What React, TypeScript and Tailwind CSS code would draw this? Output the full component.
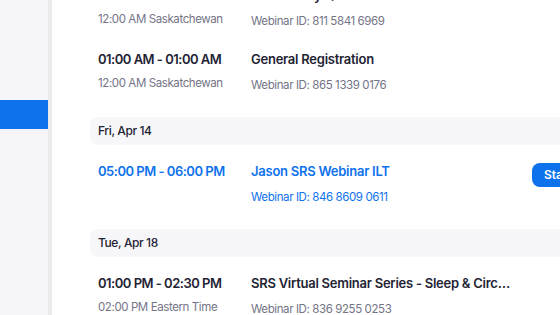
import { Fragment } from 'react';

type Row = {
  time: string;
  zone?: string;
  title: string;
  id: string;
  active?: boolean;
};

type Day = { label?: string; rows: Row[] };

const days: Day[] = [
  {
    rows: [
      { time: '12:00 AM - 01:00 AM', zone: '12:00 AM Saskatchewan', title: 'Community Q&A', id: '811 5841 6969' },
      { time: '01:00 AM - 01:00 AM', zone: '12:00 AM Saskatchewan', title: 'General Registration', id: '865 1339 0176' },
    ],
  },
  {
    label: 'Fri, Apr 14',
    rows: [{ time: '05:00 PM - 06:00 PM', title: 'Jason SRS Webinar ILT', id: '846 8609 0611', active: true }],
  },
  {
    label: 'Tue, Apr 18',
    rows: [
      {
        time: '01:00 PM - 02:30 PM',
        zone: '02:00 PM Eastern Time',
        title: 'SRS Virtual Seminar Series - Sleep & Circadian Rhythms',
        id: '836 9255 0253',
      },
    ],
  },
];

export default function App() {
  return (
    <div className="flex h-[315px] w-[560px] overflow-hidden bg-white font-['Inter',sans-serif] text-[#232333]">
      {/* Sidebar */}
      <aside className="flex w-[48px] shrink-0 flex-col bg-[#f6f6f8] pt-[100px]">
        <div className="h-[29px] bg-[#0e72ed]" />
      </aside>
      <div className="w-[4px] shrink-0 bg-[#ececef]" />

      {/* Meeting list */}
      <main className="flex-1 pl-[38px]">
        <div className="-mt-[31px]">
          {days.map((day, i) => (
            <Fragment key={i}>
              {day.label && (
                <div className="mt-[20px] flex h-[28px] items-center rounded-l-lg bg-[#f7f7fa] px-2 text-[12px] font-medium tracking-[-0.4px]">
                  {day.label}
                </div>
              )}
              {day.rows.map((row) => (
                <div key={row.id} className="relative flex h-[64px] pl-2 pt-4">
                  <div className="w-[153px] shrink-0">
                    <div
                      className={`text-[13px] leading-[20px] font-semibold tracking-[-0.5px] ${row.active ? 'text-[#0e72ed]' : ''}`}
                    >
                      {row.time}
                    </div>
                    {row.zone && (
                      <div className="mt-[5px] text-[11.5px] leading-[18px] tracking-[-0.4px] text-[#747487]">
                        {row.zone}
                      </div>
                    )}
                  </div>
                  <div className="w-[264px] min-w-0">
                    <div
                      className={`truncate text-[13px] leading-[20px] font-semibold tracking-[-0.25px] ${row.active ? 'text-[#0e72ed]' : ''}`}
                    >
                      {row.title}
                    </div>
                    <div
                      className={`mt-[7px] text-[11.5px] leading-[18px] tracking-[-0.4px] ${row.active ? 'text-[#0e72ed]' : 'text-[#747487]'}`}
                    >
                      Webinar ID: {row.id}
                    </div>
                  </div>
                  {row.active && (
                    <button className="absolute top-[18px] left-[442px] h-[24px] w-[60px] rounded-lg bg-[#0e72ed] pl-3 text-left text-[12px] font-semibold text-white">
                      Start
                    </button>
                  )}
                </div>
              ))}
            </Fragment>
          ))}
        </div>
      </main>
    </div>
  );
}
